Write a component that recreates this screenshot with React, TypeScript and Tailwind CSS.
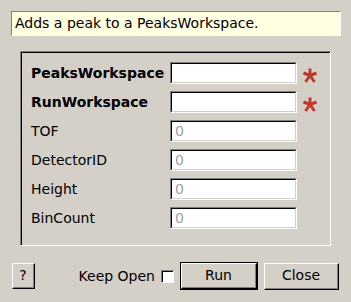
import React from "react";

const font = { fontFamily: '"DejaVu Sans", sans-serif' };

function Field({ label, bold, required, value }: { label: string; bold?: boolean; required?: boolean; value?: string }) {
  return (
    <div className="flex items-center h-[22px]">
      <div className={`w-[139px] text-[14px] text-black whitespace-nowrap ${bold ? "font-bold" : ""}`}>{label}</div>
      <div className="w-[127px] h-[22px] border-t border-l border-b border-r border-t-[#808080] border-l-[#808080] border-b-white border-r-white">
        <div className="h-full w-full bg-white border-t border-l border-b border-r border-t-black border-l-black border-b-[#d4d0c8] border-r-[#d4d0c8] flex items-center pl-[3px] text-[14px] text-[#a0a0a0]">
          {value}
        </div>
      </div>
      {required && (
        <div className="ml-[6px] w-[14px] h-[15px] mt-[4px]">
          <svg width="14" height="15" viewBox="0 0 14 15">
            <g stroke="#c0392b" strokeWidth="3" strokeLinecap="butt">
              <line x1="7" y1="0.5" x2="7" y2="7.5" />
              <line x1="0.5" y1="5" x2="7" y2="7.5" />
              <line x1="13.5" y1="5" x2="7" y2="7.5" />
              <line x1="2.5" y1="14" x2="7" y2="7.5" />
              <line x1="11.5" y1="14" x2="7" y2="7.5" />
            </g>
          </svg>
        </div>
      )}
    </div>
  );
}

export default function App() {
  return (
    <div style={font} className="w-[351px] h-[302px] bg-[#d4d0c8] flex flex-col">
      <div className="mt-[11px] ml-[11px] w-[330px] h-[25px] bg-[#ffffe1] border-t border-l border-b border-r border-t-[#808080] border-l-[#808080] border-b-white border-r-white flex items-center pl-[3px] text-[14px] text-black whitespace-nowrap">
        Adds a peak to a PeaksWorkspace.
      </div>
      <div className="mt-[15px] ml-[20px] w-[311px] h-[195px] border-t border-l border-b border-r border-t-[#808080] border-l-[#808080] border-b-white border-r-white">
        <div className="h-full w-full border-t border-l border-t-black border-l-black pt-[9px] pl-[9px] flex flex-col gap-[7px]">
          <Field label="PeaksWorkspace" bold required />
          <Field label="RunWorkspace" bold required />
          <Field label="TOF" value="0" />
          <Field label="DetectorID" value="0" />
          <Field label="Height" value="0" />
          <Field label="BinCount" value="0" />
        </div>
      </div>
      <div className="mt-[16px] flex items-center h-[28px]">
        <div className="ml-[12px] w-[23px] h-[26px] border-t border-l border-b border-r border-t-white border-l-white border-b-black border-r-black">
          <div className="h-full w-full border-b border-r border-b-[#808080] border-r-[#808080] flex items-center justify-center text-[14px] text-black">?</div>
        </div>
        <div className="w-[120px] text-right text-[14px] text-black whitespace-nowrap">Keep Open</div>
        <div className="ml-[6px] w-[13px] h-[13px] border-t border-l border-b border-r border-t-[#808080] border-l-[#808080] border-b-white border-r-white">
          <div className="h-full w-full bg-white border-t border-l border-t-black border-l-black" />
        </div>
        <div className="ml-[6px] w-[78px] h-[28px] border border-black">
          <div className="h-full w-full border-t border-l border-b border-r border-t-white border-l-white border-b-black border-r-black">
            <div className="h-full w-full border-b border-r border-b-[#808080] border-r-[#808080] flex items-center justify-center text-[14px] text-black">Run</div>
          </div>
        </div>
        <div className="ml-[6px] w-[75px] h-[27px] border-t border-l border-b border-r border-t-white border-l-white border-b-black border-r-black">
          <div className="h-full w-full border-b border-r border-b-[#808080] border-r-[#808080] flex items-center justify-center text-[14px] text-black">Close</div>
        </div>
      </div>
    </div>
  );
}
